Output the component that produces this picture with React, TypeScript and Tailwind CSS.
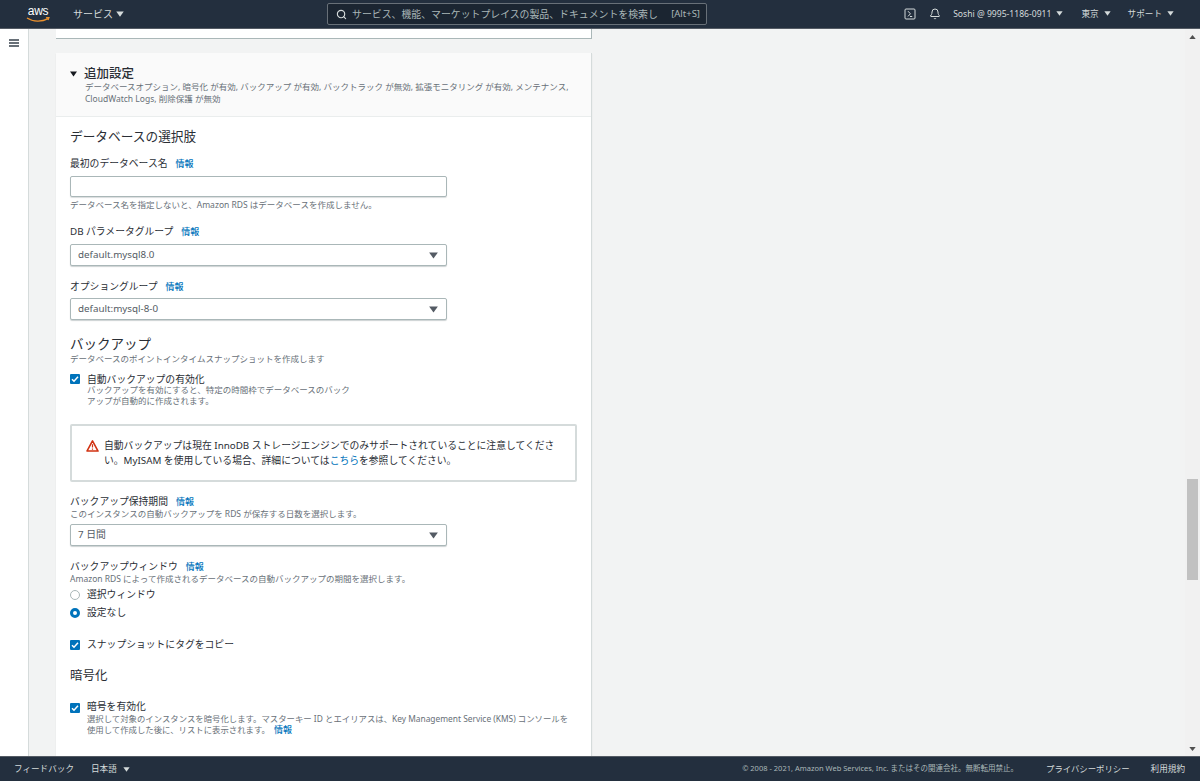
import React from "react";
import { Search, Bell } from "lucide-react";

const Caret = ({ className = "" }: { className?: string }) => (
  <svg viewBox="0 0 10 8" className={className} fill="currentColor"><path d="M0 0.5h10L5 7.5z" /></svg>
);
const Info = ({ ml = "ml-[8px]" }: { ml?: string }) => <span className={`${ml} text-[9px] text-[#0073bb] font-medium`}>情報</span>;

const Label = ({ children, mt }: { children: React.ReactNode; mt: string }) => (
  <div className={`${mt} h-[14px] leading-[14px] text-[9.8px] text-[#2a2e35] flex items-center`}>
    <span>{children}</span>
    <Info />
  </div>
);

const Select = ({ value, mt }: { value: string; mt: string }) => (
  <div className={`${mt} w-[377px] h-[22px] bg-white border border-[#aab7b8] rounded-[2px] shadow-[0_1px_1px_rgba(0,28,36,0.2)] flex items-center justify-between pl-[7px] pr-[8px] text-[9.8px] text-[#545b64]`}>
    <span>{value}</span>
    <Caret className="w-[9px] h-[7px] text-[#545b64]" />
  </div>
);

const Check = ({ mt = "" }: { mt?: string }) => (
  <span className={`${mt} w-[10px] h-[10px] rounded-[1px] bg-[#0073bb] flex items-center justify-center shrink-0`}>
    <svg viewBox="0 0 10 10" className="w-[10px] h-[10px]" fill="none" stroke="white" strokeWidth="1.5"><path d="M2 5.2l2 2L8 2.8" /></svg>
  </span>
);

export default function App() {
  return (
    <div className="h-[781px] w-[1200px] flex flex-col overflow-hidden bg-[#f2f3f3] text-[#2a2e35] font-['Noto_Sans','Noto_Sans_CJK_JP',sans-serif]">
      <header className="h-[29px] shrink-0 bg-[#232f3e] border-b border-[#545b64] flex items-center text-[#d5dbdb] relative">
        <div className="ml-[26px] w-[24px] flex flex-col items-center relative h-[24px]">
          <span className="text-white text-[12px] leading-[14px] font-normal tracking-[-0.3px] mt-[2px] font-['Liberation_Sans',sans-serif]">aws</span>
          <svg viewBox="0 0 24 6" className="w-[24px] h-[6px] -mt-[1px]" fill="none" stroke="#ec912d" strokeWidth="1.3"><path d="M1 1c6 4 15 4 21 .6" /><path d="M20 .8l3-.4-1 2.6" /></svg>
        </div>
        <span className="ml-[23px] text-[10px]">サービス</span>
        <Caret className="ml-[3px] w-[8px] h-[6px]" />
        <div className="ml-[203px] w-[380px] h-[22px] bg-[#1b2531] border border-[#687078] rounded-[2px] flex items-center pl-[8px] pr-[6px] text-[9.9px] text-[#aab7b8]">
          <Search size={11} strokeWidth={2.5} className="text-[#d5dbdb]" />
          <span className="ml-[5px] whitespace-nowrap">サービス、機能、マーケットプレイスの製品、ドキュメントを検索し</span>
          <span className="ml-auto text-[9.5px]">[Alt+S]</span>
        </div>
        <div className="ml-auto flex items-center text-[8.6px] pr-[26px]">
          <svg viewBox="0 0 12 12" className="w-[12px] h-[12px]" fill="none" stroke="currentColor" strokeWidth="1"><rect x="1" y="1" width="10" height="10" rx="1" /><path d="M4 3.2l2.4 2.6L4 8.4M6 8.5h2.2" /></svg>
          <Bell size={12} className="ml-[13px]" />
          <span className="ml-[12px]">Soshi @ 9995-1186-0911</span>
          <Caret className="ml-[5px] w-[7px] h-[5px]" />
          <span className="ml-[18px]">東京</span>
          <Caret className="ml-[5px] w-[7px] h-[5px]" />
          <span className="ml-[17px]">サポート</span>
          <Caret className="ml-[5px] w-[7px] h-[5px]" />
        </div>
      </header>

      <div className="flex-1 min-h-0 flex overflow-hidden">
        <aside className="w-[29px] shrink-0 bg-white border-r border-[#d5dbdb] flex justify-center pt-[10px]">
          <div className="w-[10px] h-[8px] flex flex-col justify-between">
            <span className="h-[2px] bg-[#687078]" />
            <span className="h-[2px] bg-[#687078]" />
            <span className="h-[2px] bg-[#687078]" />
          </div>
        </aside>

        <main className="flex-1 min-w-0 overflow-hidden pl-[27px]">
          <div className="w-[536px] h-[10px] bg-white border-b border-r border-[#aab7b8]" />
          <section className="mt-[14px] w-[536px] h-[720px] bg-white border-r border-[#d5dbdb] shadow-[0_1px_1px_rgba(0,28,36,0.1)]">
            <div className="h-[64px] bg-[#fafafa] border-b border-[#eaeded] pl-[14px] pt-[14px]">
              <div className="flex items-center h-[14px]">
                <Caret className="w-[7px] h-[6px] text-[#16191f]" />
                <h2 className="ml-[7px] text-[12.5px] font-medium leading-[14px]">追加設定</h2>
              </div>
              <p className="ml-[15px] text-[8.5px] leading-[12px] text-[#687078] w-[495px]">
                データベースオプション, 暗号化 が有効, バックアップ が有効, バックトラック が無効, 拡張モニタリング が有効, メンテナンス,<br />CloudWatch Logs, 削除保護 が無効
              </p>
            </div>
            <div className="pl-[14px]">
              <h3 className="mt-[11px] h-[16px] leading-[16px] text-[12.7px]">データベースの選択肢</h3>
              <Label mt="mt-[13px]">最初のデータベース名</Label>
              <div className="mt-[5px] w-[377px] h-[21px] bg-white border border-[#aab7b8] rounded-[2px] shadow-[0_1px_1px_rgba(0,28,36,0.15)]" />
              <p className="mt-[2px] h-[12px] leading-[12px] text-[8.5px] text-[#687078]">データベース名を指定しないと、Amazon RDS はデータベースを作成しません。</p>
              <Label mt="mt-[14px]">DB パラメータグループ</Label>
              <Select value="default.mysql8.0" mt="mt-[5px]" />
              <Label mt="mt-[14px]">オプショングループ</Label>
              <Select value="default:mysql-8-0" mt="mt-[4px]" />

              <h3 className="mt-[16px] h-[16px] leading-[16px] text-[13.5px]">バックアップ</h3>
              <p className="mt-[1px] h-[12px] leading-[12px] text-[8.5px] text-[#687078]">データベースのポイントインタイムスナップショットを作成します</p>
              <div className="mt-[9px] flex items-start">
                <Check />
                <div className="ml-[7px]">
                  <div className="text-[9.8px] leading-[12px]">自動バックアップの有効化</div>
                  <p className="-mt-[1px] text-[8.5px] leading-[10.5px] text-[#687078] w-[270px]">バックアップを有効にすると、特定の時間枠でデータベースのバック<br />アップが自動的に作成されます。</p>
                </div>
              </div>

              <div className="mt-[18px] w-[507px] h-[58px] border-2 border-[#d5dbdb] rounded-[2px] pl-[14px] pr-[8px] flex items-center">
                <svg viewBox="0 0 14 13" className="w-[13px] h-[12px] shrink-0 self-start mt-[14px]"><path d="M7 1L13 12H1z" fill="none" stroke="#d13212" strokeWidth="1.7" strokeLinejoin="round" /><path d="M7 4.6v3.6M7 9.2v1.3" stroke="#d13212" strokeWidth="1.3" /></svg>
                <p className="ml-[5px] text-[9.8px] leading-[15px]">
                  自動バックアップは現在 InnoDB ストレージエンジンでのみサポートされていることに注意してください。MyISAM を使用している場合、詳細については<span className="text-[#0073bb]">こちら</span>を参照してください。
                </p>
              </div>

              <Label mt="mt-[13px]">バックアップ保持期間</Label>
              <p className="-mt-[1px] h-[12px] leading-[12px] text-[8.5px] text-[#687078]">このインスタンスの自動バックアップを RDS が保存する日数を選択します。</p>
              <Select value="7 日間" mt="mt-[4px]" />

              <Label mt="mt-[14px]">バックアップウィンドウ</Label>
              <p className="-mt-[1px] h-[12px] leading-[12px] text-[8.5px] text-[#687078]">Amazon RDS によって作成されるデータベースの自動バックアップの期間を選択します。</p>
              <div className="mt-[3px] h-[14px] flex items-center text-[9.8px]">
                <span className="w-[10px] h-[10px] rounded-full border border-[#aab7b8] bg-white" />
                <span className="ml-[7px]">選択ウィンドウ</span>
              </div>
              <div className="mt-[4px] h-[14px] flex items-center text-[9.8px]">
                <span className="w-[10px] h-[10px] rounded-full border-[3px] border-[#0073bb] bg-white" />
                <span className="ml-[7px]">設定なし</span>
              </div>
              <div className="mt-[18px] h-[14px] flex items-center text-[9.8px]">
                <Check />
                <span className="ml-[7px]">スナップショットにタグをコピー</span>
              </div>
              <h3 className="mt-[16px] h-[16px] leading-[16px] text-[12.5px]">暗号化</h3>
              <div className="mt-[17px] flex items-start">
                <Check mt="mt-[2px]" />
                <div className="ml-[7px]">
                  <div className="text-[9.8px] leading-[12px]">暗号を有効化</div>
                  <p className="mt-[1px] text-[8.4px] leading-[10.5px] text-[#687078] w-[495px]">選択して対象のインスタンスを暗号化します。マスターキー ID とエイリアスは、Key Management Service (KMS) コンソールを<br />使用して作成した後に、リストに表示されます。<Info ml="ml-[4px]" /></p>
                </div>
              </div>
            </div>
          </section>
        </main>

        <div className="w-[15px] shrink-0 bg-[#f1f1f1] flex flex-col items-center pt-[6px] pb-[5px]">
          <svg viewBox="0 0 8 5" className="w-[7px] h-[4px] text-[#505050]" fill="currentColor"><path d="M4 0l4 5H0z" /></svg>
          <div className="flex-1 w-full px-[2px] pt-[440px]">
            <div className="h-[101px] bg-[#c1c1c1]" />
          </div>
          <svg viewBox="0 0 8 5" className="w-[7px] h-[4px] text-[#505050]" fill="currentColor"><path d="M0 0h8L4 5z" /></svg>
        </div>
      </div>

      <footer className="h-[25px] shrink-0 bg-[#232f3e] border-t border-[#545b64] flex items-center text-[#d5dbdb] text-[8.6px]">
        <span className="ml-[14px]">フィードバック</span>
        <span className="ml-[17px]">日本語</span>
        <Caret className="ml-[6px] w-[7px] h-[5px]" />
        <span className="ml-auto text-[7.5px] text-[#aab7b8]">© 2008 - 2021, Amazon Web Services, Inc. またはその関連会社。無断転用禁止。</span>
        <span className="ml-[28px] text-[8.4px]">プライバシーポリシー</span>
        <span className="ml-[21px] mr-[15px]">利用規約</span>
      </footer>
    </div>
  );
}
